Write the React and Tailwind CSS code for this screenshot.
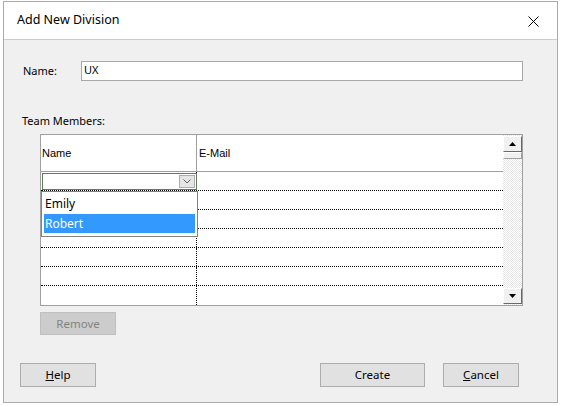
import React from 'react';

const rows = [0, 1, 2, 3, 4];

const Btn = ({ className = '', children }) => (
  <button className={`h-[24px] border border-[#adadad] bg-[#e1e1e1] text-[11.5px] text-black flex items-center justify-center ${className}`}>
    {children}
  </button>
);

const Arrow = ({ down }) => (
  <svg width="7" height="4" viewBox="0 0 7 4">
    {down ? <polygon points="0,0 7,0 3.5,4" fill="#000" /> : <polygon points="0,4 7,4 3.5,0" fill="#000" />}
  </svg>
);

const ScrollBtn = ({ down }) => (
  <div className="h-[16px] w-full bg-[#f0f0f0] border border-t-white border-l-white border-r-[#696969] border-b-[#696969] flex items-center justify-center">
    <Arrow down={down} />
  </div>
);

export default function App() {
  return (
    <div className="w-[561px] h-[406px] bg-white pt-[1px] pl-[3px] font-['Noto_Sans',sans-serif] text-[11px] text-black">
      <div className="w-[555px] h-[402px] border border-[#aaaaaa] flex flex-col">
        {/* title bar */}
        <div className="h-[38px] shrink-0 bg-white border-b border-[#cccccc] flex items-center justify-between pl-[13px] pr-[18px]">
          <span className="text-[12.5px] leading-none">Add New Division</span>
          <svg width="11" height="11" viewBox="0 0 11 11" className="mt-[1px]">
            <path d="M0.5 0.5 L10.5 10.5 M10.5 0.5 L0.5 10.5" stroke="#000" strokeWidth="1" />
          </svg>
        </div>

        <div className="flex-1 bg-[#f0f0f0] flex flex-col">
          {/* name */}
          <div className="mt-[21px] pl-[19px] flex items-center">
            <span className="w-[58px]">Name:</span>
            <div className="w-[442px] h-[20px] border border-[#a8a8a8] bg-white px-[2px] leading-[16px]">UX</div>
          </div>

          <div className="mt-[32px] pl-[18px] leading-[16px]">Team Members:</div>

          {/* grid */}
          <div className="mt-[5px] ml-[36px] w-[483px] h-[172px] border border-[#a0a0a0] bg-white flex relative">
            <div className="flex-1 flex flex-col font-['Liberation_Sans',sans-serif]">
              <div className="h-[37px] shrink-0 border-b border-[#a0a0a0] flex">
                <div className="w-[156px] border-r border-[#a0a0a0] flex items-center pl-[1px] text-[11px]">Name</div>
                <div className="flex-1 flex items-center pl-[2px] text-[11px]">E-Mail</div>
              </div>
              <div className="h-[19px] shrink-0 border-b border-dotted border-black flex">
                <div className="w-[156px] border-r border-dotted border-black pt-[1px] pl-[1px]">
                  <div className="w-[155px] h-[17px] border border-[#5e7d5e] bg-white flex justify-end items-center pr-[1px]">
                    <div className="w-[16px] h-[13px] border border-[#acacac] bg-[#e5e5e5] flex items-center justify-center">
                      <svg width="8" height="5" viewBox="0 0 8 5">
                        <path d="M0.5 0.5 L4 4 L7.5 0.5" stroke="#606060" fill="none" strokeWidth="1" />
                      </svg>
                    </div>
                  </div>
                </div>
                <div className="flex-1" />
              </div>
              {rows.map((r) => (
                <div key={r} className="h-[19px] shrink-0 border-b border-dotted border-black flex">
                  <div className="w-[156px] border-r border-dotted border-black" />
                  <div className="flex-1" />
                </div>
              ))}
              <div className="flex-1 flex">
                <div className="w-[156px] border-r border-dotted border-black" />
                <div className="flex-1" />
              </div>
            </div>

            {/* scrollbar */}
            <div className="w-[19px] flex flex-col bg-[repeating-conic-gradient(#ffffff_0_25%,#e6e6e6_0_50%)] bg-[length:2px_2px] pt-[1px]">
              <ScrollBtn />
              <div className="h-[7px] bg-[#f0f0f0] border border-t-white border-l-white border-r-[#a0a0a0] border-b-[#a0a0a0]" />
              <div className="flex-1" />
              <ScrollBtn down />
              <div className="h-[1px]" />
            </div>

            {/* dropdown list */}
            <div className="absolute left-0 top-[56px] w-[157px] h-[46px] border border-[#828282] bg-white pt-[1px] px-[2px] text-[12px] flex flex-col">
              <div className="h-[21px] flex items-center pl-[1px]">Emily</div>
              <div className="h-[19px] bg-[#3399ff] text-white flex items-center pl-[1px]">Robert</div>
            </div>
          </div>

          <div className="mt-[6px] ml-[36px] w-[76px] h-[23px] bg-[#cccccc] border border-[#bfbfbf] text-[#838383] text-[11.5px] flex items-center justify-center">
            Remove
          </div>

          {/* bottom buttons */}
          <div className="mt-[28px] flex pl-[16px] pr-[38px]">
            <Btn className="w-[76px]">
              <span><u>H</u>elp</span>
            </Btn>
            <div className="flex-1" />
            <Btn className="w-[105px]">Create</Btn>
            <Btn className="w-[76px] ml-[18px]">
              <span><u>C</u>ancel</span>
            </Btn>
          </div>
        </div>
      </div>
    </div>
  );
}
